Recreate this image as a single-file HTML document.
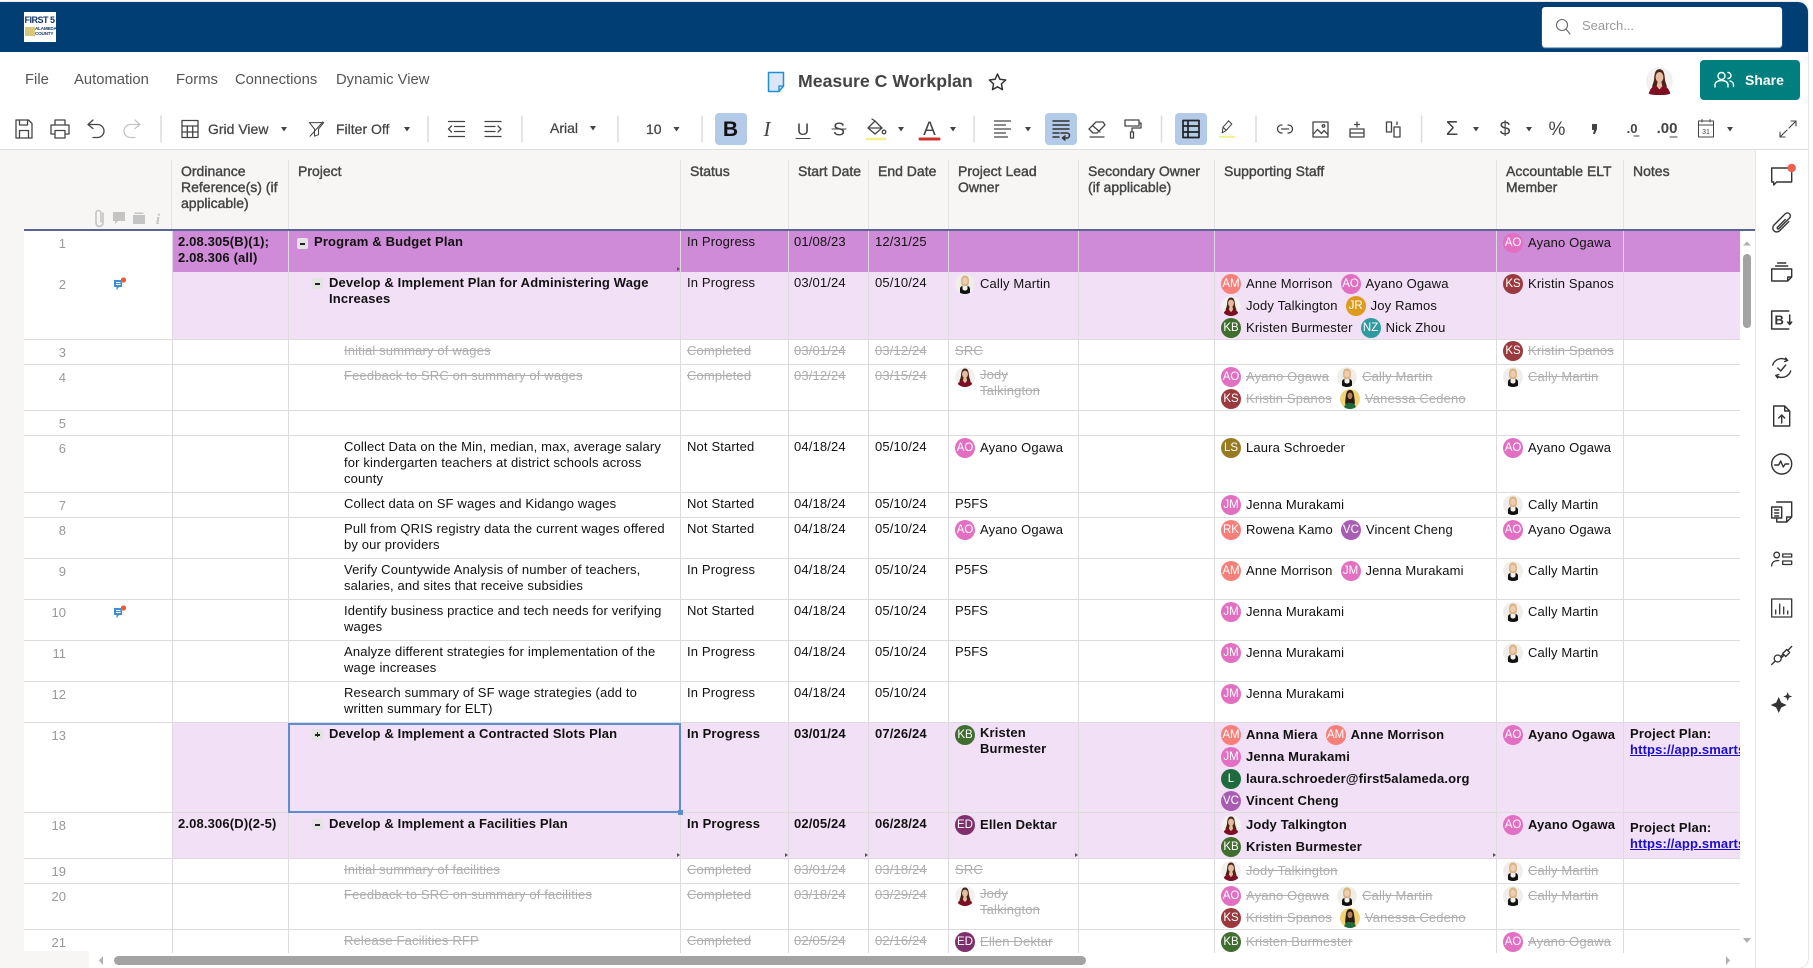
<!DOCTYPE html>
<html lang="en"><head><meta charset="utf-8"><title>Measure C Workplan</title>
<style>
html,body{margin:0;padding:0;background:#fff;width:1813px;height:968px;overflow:hidden}
*{box-sizing:border-box}
body{font-family:"Liberation Sans",Arial,sans-serif;font-size:13px;color:#111;position:relative}
.abs{position:absolute}
#card{position:absolute;left:0;top:2px;width:1808px;height:966px;background:#fff;border-radius:0 10px 10px 0;box-shadow:0 0 2px #bbb;overflow:hidden}
#top{position:absolute;left:0;top:2px;width:1808px;height:50px;background:#003e74;border-radius:0 10px 0 0}
#logo{position:absolute;left:24px;top:12px;width:32px;height:30px;background:#fff;overflow:hidden}
.menu{position:absolute;top:71px;font-size:14.8px;line-height:18px;color:#555;white-space:nowrap}
.tb{position:absolute;top:120px;font-size:14px;line-height:18px;color:#444;white-space:nowrap;-webkit-text-stroke:.25px #444}
#hdr{position:absolute;left:0;top:150px;width:1755px;height:79px;background:#f7f6f5}
.h{position:absolute;top:163px;font-size:14px;line-height:16px;color:#444;white-space:nowrap;-webkit-text-stroke:.4px #444}
.hl{position:absolute;top:160px;height:69px;width:1px;background:#e3e3e3}
#grid{position:absolute;left:0;top:231px;width:1740px;height:722px;overflow:hidden}
#gbg{position:absolute;left:24px;top:0;width:1716px;height:722px;background:#fff}
#strip{position:absolute;left:0;top:150px;width:24px;height:818px;background:#f7f6f5}
.r{position:absolute;left:24px;width:1716px;border-bottom:1px solid #dcdcdc}
.r>*{position:absolute;top:3px;line-height:16px;white-space:nowrap;letter-spacing:.15px}
.bar{position:absolute;left:148px;top:0!important;bottom:0;right:0}
.r>.n{right:1674px;top:5px;color:#999;letter-spacing:0}
.o{left:154px}
.l1{left:290px}.l2{left:305px}.l3{left:320px}
.s{left:663px}.d1{left:770px}.d2{left:851px}
.ld{left:931px}.st{left:1197px}.ac{left:1479px}
.nt{left:1606px;width:110px;overflow:hidden}
.r>.ld,.r>.st,.r>.ac{top:1px}
.r>.ln2{top:2px}
.r>span.ld{top:3px}
.ln{display:flex;align-items:center;height:22px;line-height:16px;white-space:nowrap}
.ln2{display:flex;align-items:flex-start;line-height:16px}
.a{flex:none;display:block;width:20px;height:20px;border-radius:50%;color:#fff;font-size:11.5px;line-height:20px;text-align:center;margin-right:5px;letter-spacing:0;font-weight:normal;overflow:hidden}
.t{margin-right:8px}
.b{font-weight:bold;-webkit-text-stroke:0}
.x,.x *{color:#aeaeae}
.x .t,.x.tx{text-decoration:line-through}
.x .a{color:#fff}
.tx{text-decoration:line-through}
.tg{left:0;width:11px;height:11px;background:#e3e3e3;border-radius:2px;font-size:0}
.tg:before{content:"";position:absolute;left:3px;top:5px;width:5px;height:1.6px;background:#222}
.tg.plus:after{content:"";position:absolute;left:4.7px;top:3.2px;width:1.6px;height:5px;background:#222}
.vl{position:absolute;top:0;height:722px;width:1px;background:#dfdadf}
.mk{position:absolute;width:0;height:0;border-left:3px solid #555;border-top:2.5px solid transparent;border-bottom:2.5px solid transparent}
a{color:#1a0dd6;text-decoration:underline}
.c-am{background:#f67f79}.c-ao{background:#e26fc2}.c-ks{background:#9b3a3e}.c-kb{background:#3f6e2e}.c-nz{background:#2f9aa0}.c-jr{background:#dd9b1d}.c-ls{background:#997a22}.c-jm{background:#e26fc2}.c-rk{background:#f67f79}.c-vc{background:#a65db2}.c-ed{background:#7f2f6b}.c-l{background:#1f6b3d}
svg.a{background:none}
</style></head><body>
<svg width="0" height="0" style="position:absolute"><defs>
<symbol id="jody" viewBox="0 0 20 20"><circle cx="10" cy="10" r="10" fill="#f3f1ef"/><path d="M10 1.500C7 1.500 6.300 4.500 6 8.500 5.800 11 4.800 12.500 4.500 14L7 15H13L15.500 14C15.200 12.500 14.200 11 14 8.500 13.700 4.500 13 1.500 10 1.500Z" fill="#4a2418"/><ellipse cx="10" cy="7.300" rx="2.900" ry="3.700" fill="#e6bda2"/><path d="M8.600 10.500h2.800l1 4.500h-4.800Z" fill="#e6bda2"/><path d="M2 19C3 15.500 5 13.500 7.500 13.300L10 16 12.500 13.300C15 13.500 17 15.500 18 19 15.500 20.500 4.500 20.500 2 19Z" fill="#7c1022"/></symbol>
<symbol id="cally" viewBox="0 0 20 20"><circle cx="10" cy="10" r="10" fill="#efeeea"/><path d="M10 1.500C7 1.500 6 4 6 7 6 9.500 6.500 11 7.500 12H12.500C13.500 11 14 9.500 14 7 14 4 13 1.500 10 1.500Z" fill="#d8b583"/><ellipse cx="10" cy="7" rx="2.600" ry="3.400" fill="#efcdb2"/><path d="M5 20V15C5 13 6.500 12 7.500 12V15C8.500 17 11.500 17 12.500 15V12C13.500 12 15 13 15 15V20Z" fill="#111"/><path d="M7.500 12.500h5V15c-1 2-4 2-5 0Z" fill="#f4f0ea"/></symbol>
<symbol id="van" viewBox="0 0 20 20"><circle cx="10" cy="10" r="10" fill="#f0d277"/><path d="M10 1C6.500 1 6 5 5.500 10 5 13 5 15 6 17H14C15 15 15 13 14.500 10 14 5 13.500 1 10 1Z" fill="#2a1b10"/><ellipse cx="10" cy="6.800" rx="2.500" ry="3.300" fill="#b5825b"/><path d="M4 20C4 16.500 6 14.500 8 14H12C14 14.500 16 16.500 16 20Z" fill="#1e6a3b"/></symbol>
</defs></svg>

<div id="card"></div>
<div id="top"></div>
<div id="logo">
  <div class="abs b" style="left:.5px;top:3px;font-size:9px;line-height:11px;color:#14376b;letter-spacing:-.5px;white-space:nowrap">FIRST 5</div>
  <div class="abs" style="left:1px;top:15px;width:10px;height:9px;background:#d7c77a"></div>
  <div class="abs b" style="left:11px;top:15px;font-size:4.600px;line-height:4.800px;color:#14376b;letter-spacing:-.2px;white-space:nowrap">ALAMEDA<br>COUNTY</div>
</div>
<div class="abs" style="left:1542px;top:7px;width:240px;height:40px;background:#fff;border-radius:3px;box-shadow:0 1px 1px #b8c8da"></div>
<div class="abs" style="left:1582px;top:18px;font-size:13px;line-height:16px;color:#999">Search...</div>

<span class="menu" style="left:25px">File</span>
<span class="menu" style="left:74px">Automation</span>
<span class="menu" style="left:176px">Forms</span>
<span class="menu" style="left:235px">Connections</span>
<span class="menu" style="left:336px">Dynamic View</span>
<div class="abs b" style="left:798px;top:70px;font-size:17.700px;line-height:22px;color:#444;white-space:nowrap">Measure C Workplan</div>

<div class="abs" style="left:1700px;top:60px;width:100px;height:40px;background:#007f7e;border-radius:4px"></div>
<div class="abs b" style="left:1745px;top:71px;font-size:14px;line-height:18px;color:#fff">Share</div>
<svg class="abs" style="left:1646px;top:67px" width="27" height="28" viewBox="0 0 20 20" preserveAspectRatio="none"><use href="#jody"/></svg>

<div class="abs" style="left:715px;top:113px;width:32px;height:32px;background:#b3cbe9;border-radius:4px"></div>
<div class="abs" style="left:1045px;top:113px;width:32px;height:32px;background:#b3cbe9;border-radius:4px"></div>
<div class="abs" style="left:1175px;top:113px;width:32px;height:32px;background:#b3cbe9;border-radius:4px"></div>
<span class="tb" style="left:208px">Grid View</span>
<span class="tb" style="left:336px">Filter Off</span>
<span class="tb" style="left:550px;top:119px">Arial</span>
<span class="tb" style="left:646px">10</span>
<div class="abs" style="left:0;top:149px;width:1808px;height:1px;background:#dedede"></div>

<div id="strip"></div>
<div id="hdr"></div>
<div class="hl" style="left:171px"></div><div class="hl" style="left:288px"></div><div class="hl" style="left:680px"></div><div class="hl" style="left:788px"></div><div class="hl" style="left:868px"></div><div class="hl" style="left:948px"></div><div class="hl" style="left:1078px"></div><div class="hl" style="left:1214px"></div><div class="hl" style="left:1496px"></div><div class="hl" style="left:1623px"></div>
<div class="h" style="left:181px">Ordinance<br>Reference(s) (if<br>applicable)</div>
<div class="h" style="left:298px">Project</div>
<div class="h" style="left:690px">Status</div>
<div class="h" style="left:798px">Start Date</div>
<div class="h" style="left:878px">End Date</div>
<div class="h" style="left:958px">Project Lead<br>Owner</div>
<div class="h" style="left:1088px">Secondary Owner<br>(if applicable)</div>
<div class="h" style="left:1224px">Supporting Staff</div>
<div class="h" style="left:1506px">Accountable ELT<br>Member</div>
<div class="h" style="left:1633px">Notes</div>
<div class="abs" style="left:24px;top:229px;width:1731px;height:2px;background:#5b6592"></div>

<div id="grid"><div id="gbg"></div>
<!-- R1 -->
<div class="r" style="top:0;height:41px;border:0"><div class="bar" style="background:#cf8bd7"></div>
<span class="n">1</span><span class="o b">2.08.305(B)(1);<br>2.08.306 (all)</span><span class="tg" style="left:273px;top:7px"></span><span class="l1 b">Program &amp; Budget Plan</span><span class="s">In Progress</span><span class="d1">01/08/23</span><span class="d2">12/31/25</span>
<div class="ac" style="top:1px"><div class="ln"><span class="a c-ao">AO</span><span class="t">Ayano Ogawa</span></div></div></div>
<!-- R2 -->
<div class="r" style="top:41px;height:68px"><div class="bar" style="background:#f2e0f6"></div>
<span class="n">2</span><span class="tg" style="left:288px;top:6px"></span><span class="l2 b">Develop &amp; Implement Plan for Administering Wage<br>Increases</span><span class="s">In Progress</span><span class="d1">03/01/24</span><span class="d2">05/10/24</span>
<div class="ld"><div class="ln"><svg class="a" viewBox="0 0 20 20"><use href="#cally"/></svg><span class="t">Cally Martin</span></div></div>
<div class="st"><div class="ln"><span class="a c-am">AM</span><span class="t">Anne Morrison</span><span class="a c-ao">AO</span><span class="t">Ayano Ogawa</span></div><div class="ln"><svg class="a" viewBox="0 0 20 20"><use href="#jody"/></svg><span class="t">Jody Talkington</span><span class="a c-jr">JR</span><span class="t">Joy Ramos</span></div><div class="ln"><span class="a c-kb">KB</span><span class="t">Kristen Burmester</span><span class="a c-nz">NZ</span><span class="t">Nick Zhou</span></div></div>
<div class="ac"><div class="ln"><span class="a c-ks">KS</span><span class="t">Kristin Spanos</span></div></div></div>
<!-- R3 -->
<div class="r x" style="top:109px;height:25px"><span class="n">3</span><span class="l3 tx">Initial summary of wages</span><span class="s tx">Completed</span><span class="d1 tx">03/01/24</span><span class="d2 tx">03/12/24</span><span class="ld tx">SRC</span>
<div class="ac" style="top:0"><div class="ln"><span class="a c-ks">KS</span><span class="t">Kristin Spanos</span></div></div></div>
<!-- R4 -->
<div class="r x" style="top:134px;height:46px"><span class="n">4</span><span class="l3 tx">Feedback to SRC on summary of wages</span><span class="s tx">Completed</span><span class="d1 tx">03/12/24</span><span class="d2 tx">03/15/24</span>
<div class="ld ln2"><svg class="a" viewBox="0 0 20 20"><use href="#jody"/></svg><span class="t">Jody<br>Talkington</span></div>
<div class="st"><div class="ln"><span class="a c-ao">AO</span><span class="t">Ayano Ogawa</span><svg class="a" viewBox="0 0 20 20"><use href="#cally"/></svg><span class="t">Cally Martin</span></div><div class="ln"><span class="a c-ks">KS</span><span class="t">Kristin Spanos</span><svg class="a" viewBox="0 0 20 20"><use href="#van"/></svg><span class="t">Vanessa Cedeno</span></div></div>
<div class="ac"><div class="ln"><svg class="a" viewBox="0 0 20 20"><use href="#cally"/></svg><span class="t">Cally Martin</span></div></div></div>
<!-- R5 -->
<div class="r" style="top:180px;height:25px"><span class="n">5</span></div>
<!-- R6 -->
<div class="r" style="top:205px;height:57px"><span class="n">6</span><span class="l3">Collect Data on the Min, median, max, average salary<br>for kindergarten teachers at district schools across<br>county</span><span class="s">Not Started</span><span class="d1">04/18/24</span><span class="d2">05/10/24</span>
<div class="ld"><div class="ln"><span class="a c-ao">AO</span><span class="t">Ayano Ogawa</span></div></div><div class="st"><div class="ln"><span class="a c-ls">LS</span><span class="t">Laura Schroeder</span></div></div><div class="ac"><div class="ln"><span class="a c-ao">AO</span><span class="t">Ayano Ogawa</span></div></div></div>
<!-- R7 -->
<div class="r" style="top:262px;height:25px"><span class="n">7</span><span class="l3">Collect data on SF wages and Kidango wages</span><span class="s">Not Started</span><span class="d1">04/18/24</span><span class="d2">05/10/24</span><span class="ld">P5FS</span>
<div class="st" style="top:1px"><div class="ln"><span class="a c-jm">JM</span><span class="t">Jenna Murakami</span></div></div><div class="ac" style="top:1px"><div class="ln"><svg class="a" viewBox="0 0 20 20"><use href="#cally"/></svg><span class="t">Cally Martin</span></div></div></div>
<!-- R8 -->
<div class="r" style="top:287px;height:41px"><span class="n">8</span><span class="l3">Pull from QRIS registry data the current wages offered<br>by our providers</span><span class="s">Not Started</span><span class="d1">04/18/24</span><span class="d2">05/10/24</span>
<div class="ld"><div class="ln"><span class="a c-ao">AO</span><span class="t">Ayano Ogawa</span></div></div><div class="st"><div class="ln"><span class="a c-rk">RK</span><span class="t">Rowena Kamo</span><span class="a c-vc">VC</span><span class="t">Vincent Cheng</span></div></div><div class="ac"><div class="ln"><span class="a c-ao">AO</span><span class="t">Ayano Ogawa</span></div></div></div>
<!-- R9 -->
<div class="r" style="top:328px;height:41px"><span class="n">9</span><span class="l3">Verify Countywide Analysis of number of teachers,<br>salaries, and sites that receive subsidies</span><span class="s">In Progress</span><span class="d1">04/18/24</span><span class="d2">05/10/24</span><span class="ld">P5FS</span>
<div class="st"><div class="ln"><span class="a c-am">AM</span><span class="t">Anne Morrison</span><span class="a c-jm">JM</span><span class="t">Jenna Murakami</span></div></div><div class="ac"><div class="ln"><svg class="a" viewBox="0 0 20 20"><use href="#cally"/></svg><span class="t">Cally Martin</span></div></div></div>
<!-- R10 -->
<div class="r" style="top:369px;height:41px"><span class="n">10</span><span class="l3">Identify business practice and tech needs for verifying<br>wages</span><span class="s">Not Started</span><span class="d1">04/18/24</span><span class="d2">05/10/24</span><span class="ld">P5FS</span>
<div class="st"><div class="ln"><span class="a c-jm">JM</span><span class="t">Jenna Murakami</span></div></div><div class="ac"><div class="ln"><svg class="a" viewBox="0 0 20 20"><use href="#cally"/></svg><span class="t">Cally Martin</span></div></div></div>
<!-- R11 -->
<div class="r" style="top:410px;height:41px"><span class="n">11</span><span class="l3">Analyze different strategies for implementation of the<br>wage increases</span><span class="s">In Progress</span><span class="d1">04/18/24</span><span class="d2">05/10/24</span><span class="ld">P5FS</span>
<div class="st"><div class="ln"><span class="a c-jm">JM</span><span class="t">Jenna Murakami</span></div></div><div class="ac"><div class="ln"><svg class="a" viewBox="0 0 20 20"><use href="#cally"/></svg><span class="t">Cally Martin</span></div></div></div>
<!-- R12 -->
<div class="r" style="top:451px;height:41px"><span class="n">12</span><span class="l3">Research summary of SF wage strategies (add to<br>written summary for ELT)</span><span class="s">In Progress</span><span class="d1">04/18/24</span><span class="d2">05/10/24</span>
<div class="st"><div class="ln"><span class="a c-jm">JM</span><span class="t">Jenna Murakami</span></div></div></div>
<!-- R13 -->
<div class="r b" style="top:492px;height:90px"><div class="bar" style="background:#f2e0f6"></div>
<span class="n" style="font-weight:normal">13</span><span class="tg plus" style="left:288px;top:6px"></span><span class="l2">Develop &amp; Implement a Contracted Slots Plan</span><span class="s">In Progress</span><span class="d1">03/01/24</span><span class="d2">07/26/24</span>
<div class="ld ln2"><span class="a c-kb">KB</span><span class="t">Kristen<br>Burmester</span></div>
<div class="st"><div class="ln"><span class="a c-am">AM</span><span class="t">Anna Miera</span><span class="a c-am">AM</span><span class="t">Anne Morrison</span></div><div class="ln"><span class="a c-jm">JM</span><span class="t">Jenna Murakami</span></div><div class="ln"><span class="a c-l">L</span><span class="t">laura.schroeder@first5alameda.org</span></div><div class="ln"><span class="a c-vc">VC</span><span class="t">Vincent Cheng</span></div></div>
<div class="ac"><div class="ln"><span class="a c-ao">AO</span><span class="t">Ayano Ogawa</span></div></div>
<div class="nt" style="font-weight:bold">Project Plan:<br><a>https://app.smartsheet.com</a></div></div>
<!-- R18 -->
<div class="r b" style="top:582px;height:46px"><div class="bar" style="background:#f2e0f6"></div>
<span class="n" style="font-weight:normal">18</span><span class="o">2.08.306(D)(2-5)</span><span class="tg" style="left:288px;top:6px"></span><span class="l2">Develop &amp; Implement a Facilities Plan</span><span class="s">In Progress</span><span class="d1">02/05/24</span><span class="d2">06/28/24</span>
<div class="ld"><div class="ln"><span class="a c-ed">ED</span><span class="t">Ellen Dektar</span></div></div>
<div class="st"><div class="ln"><svg class="a" viewBox="0 0 20 20"><use href="#jody"/></svg><span class="t">Jody Talkington</span></div><div class="ln"><span class="a c-kb">KB</span><span class="t">Kristen Burmester</span></div></div>
<div class="ac"><div class="ln"><span class="a c-ao">AO</span><span class="t">Ayano Ogawa</span></div></div>
<div class="nt" style="top:7px;font-weight:bold">Project Plan:<br><a>https://app.smartsheet.com</a></div></div>
<!-- R19 -->
<div class="r x" style="top:628px;height:25px"><span class="n">19</span><span class="l3 tx">Initial summary of facilities</span><span class="s tx">Completed</span><span class="d1 tx">03/01/24</span><span class="d2 tx">03/18/24</span><span class="ld tx">SRC</span>
<div class="st" style="top:1px"><div class="ln"><svg class="a" viewBox="0 0 20 20"><use href="#jody"/></svg><span class="t">Jody Talkington</span></div></div><div class="ac" style="top:1px"><div class="ln"><svg class="a" viewBox="0 0 20 20"><use href="#cally"/></svg><span class="t">Cally Martin</span></div></div></div>
<!-- R20 -->
<div class="r x" style="top:653px;height:46px"><span class="n">20</span><span class="l3 tx">Feedback to SRC on summary of facilities</span><span class="s tx">Completed</span><span class="d1 tx">03/18/24</span><span class="d2 tx">03/29/24</span>
<div class="ld ln2"><svg class="a" viewBox="0 0 20 20"><use href="#jody"/></svg><span class="t">Jody<br>Talkington</span></div>
<div class="st"><div class="ln"><span class="a c-ao">AO</span><span class="t">Ayano Ogawa</span><svg class="a" viewBox="0 0 20 20"><use href="#cally"/></svg><span class="t">Cally Martin</span></div><div class="ln"><span class="a c-ks">KS</span><span class="t">Kristin Spanos</span><svg class="a" viewBox="0 0 20 20"><use href="#van"/></svg><span class="t">Vanessa Cedeno</span></div></div>
<div class="ac"><div class="ln"><svg class="a" viewBox="0 0 20 20"><use href="#cally"/></svg><span class="t">Cally Martin</span></div></div></div>
<!-- R21 -->
<div class="r x" style="top:699px;height:46px;border:0"><span class="n">21</span><span class="l3 tx">Release Facilities RFP</span><span class="s tx">Completed</span><span class="d1 tx">02/05/24</span><span class="d2 tx">02/16/24</span>
<div class="ld" style="top:1px"><div class="ln"><span class="a c-ed">ED</span><span class="t">Ellen Dektar</span></div></div><div class="st" style="top:1px"><div class="ln"><span class="a c-kb">KB</span><span class="t">Kristen Burmester</span></div></div><div class="ac" style="top:1px"><div class="ln"><span class="a c-ao">AO</span><span class="t">Ayano Ogawa</span></div></div></div>

<div class="vl" style="left:172px"></div><div class="vl" style="left:288px"></div><div class="vl" style="left:680px"></div><div class="vl" style="left:788px"></div><div class="vl" style="left:868px"></div><div class="vl" style="left:948px"></div><div class="vl" style="left:1078px"></div><div class="vl" style="left:1214px"></div><div class="vl" style="left:1496px"></div><div class="vl" style="left:1623px"></div>
<!-- selection -->
<div class="abs" style="left:288px;top:492px;width:393px;height:90px;border:2px solid #5b8fd0"></div>
<div class="abs" style="left:678px;top:579px;width:5px;height:5px;background:#5b8fd0"></div>
<div class="mk" style="left:677px;top:36px"></div>
<div class="mk" style="left:677px;top:622px"></div><div class="mk" style="left:785px;top:622px"></div><div class="mk" style="left:865px;top:622px"></div><div class="mk" style="left:1075px;top:622px"></div><div class="mk" style="left:1493px;top:622px"></div>
<!-- comment markers -->
<svg class="abs" style="left:112px;top:46px" width="16" height="16" viewBox="0 0 16 16"><path d="M2 3H10V10H7L4.500 13.500V10H2Z" fill="#3f8fd2"/><path d="M4 5.500H8.500M4 7.500H8.500" stroke="#fff" stroke-width="1"/><circle cx="11.500" cy="3" r="2.600" fill="#ea5b3a"/></svg>
<svg class="abs" style="left:112px;top:374px" width="16" height="16" viewBox="0 0 16 16"><path d="M2 3H10V10H7L4.500 13.500V10H2Z" fill="#3f8fd2"/><path d="M4 5.500H8.500M4 7.500H8.500" stroke="#fff" stroke-width="1"/><circle cx="11.500" cy="3" r="2.600" fill="#ea5b3a"/></svg>
</div>

<!-- scrollbars / panel -->
<div class="abs" style="left:0;top:951px;width:89px;height:17px;background:#f7f6f5"></div>
<div class="abs" style="left:1743px;top:254px;width:8px;height:74px;background:#a3a3a3;border-radius:4px"></div>
<div class="abs" style="left:114px;top:956px;width:972px;height:9px;background:#a3a3a3;border-radius:5px"></div>
<div class="abs" style="left:1755px;top:150px;width:1px;height:818px;background:#e6e6e6"></div>

<svg class="abs" style="left:0;top:0" width="1813" height="968" viewBox="0 0 1813 968" fill="none" stroke="#444" stroke-width="1.300" stroke-linecap="round" stroke-linejoin="round" font-family="Liberation Sans,Arial,sans-serif">
<!-- scroll arrows -->
<g fill="#b0b0b0" stroke="none"><path d="M1743 245.500h8l-4-4Z"/><path d="M1743 938h8l-4 5Z"/><path d="M1726 956v9l4-4.500Z"/><path d="M103 956v9l-4-4.500Z"/></g>
<!-- search + star + doc -->
<g transform="translate(1563,26)" stroke="#666" stroke-width="1.100"><circle cx="-1" cy="-1" r="5.500"/><path d="M3 3 7 8"/></g>
<g transform="translate(776,82)"><path d="M-7.500-9.500H7.500V4L3 9.500H-7.500Z" fill="#dbe6f7" stroke="#1e8fd0" stroke-width="1.500"/><path d="M7.500 4H3V9.500" stroke="#1e8fd0"/></g>
<path transform="translate(997.500,82)" d="M0-8 2.400-2.700 8.200-2 3.900 1.900 5 7.600 0 4.800-5 7.600-3.900 1.900-8.200-2-2.400-2.700Z" stroke="#333" stroke-width="1.500"/>
<g transform="translate(1724,80)" stroke="#fff" stroke-width="1.400"><circle cx="-2.500" cy="-4" r="3.500"/><path d="M-9 7V5C-9 2-6 .5-2.500.5S4 2 4 5V7"/><path d="M4-7.500A3 3 0 0 1 4-1.500M6 1C8 1.500 9.500 3 9.500 5V6.500"/></g>
<!-- toolbar -->
<g transform="translate(24,129)"><path d="M-8-9H4.500L8-5.500V9H-8Z M-4.500-9V-4H3.500V-9 M-4.500 9V1.500H4.500V9"/></g>
<g transform="translate(60,129)"><path d="M-5-4V-9H5V-4 M-5 5H-9V-4H9V5H5 M-5 1.500H5V9H-5Z"/></g>
<g transform="translate(96,129)"><path d="M-3-9-8-4.500-3-.5 M-8-4.500H1.500A6.500 6.500 0 0 1 1.500 8.500H-3"/></g>
<g transform="translate(132,129)" stroke="#c4c4c4"><path d="M3-9 8-4.500 3-.5 M8-4.500H-1.500A6.500 6.500 0 0 0-1.500 8.500H3"/></g>
<path d="M161 116V142M428 116V142M522 116V142M618 116V142M702 116V142M974 116V142M1161.500 116V142M1256 116V142M1421.500 116V142" stroke="#dcdcdc" stroke-width="1.500"/>
<g transform="translate(190,129)"><path d="M-8-8.500H8V8.500H-8Z M-8-3H8M-8 3H8M-2.700-3V8.500M2.700-3V8.500"/></g>
<g transform="translate(316.500,129) scale(.8)"><path d="M-9-8H9L2.500 0V7L-2.500 9V0Z M-8 9 8-9"/></g>
<g fill="#444" stroke="none"><path d="M281 127h6l-3 4.500Z"/><path d="M404 127h6l-3 4.500Z"/><path d="M590 126h6l-3 4.500Z"/><path d="M673.500 127h6l-3 4.500Z"/><path d="M898 127h6l-3 4.500Z"/><path d="M950 127h6l-3 4.500Z"/><path d="M1025 127h6l-3 4.500Z"/><path d="M1473 127h6l-3 4.500Z"/><path d="M1526 127h6l-3 4.500Z"/><path d="M1727 127h6l-3 4.500Z"/></g>
<g transform="translate(456.500,129)"><path d="M-8-7.500H8M-2-2.500H8M-2 2.500H8M-8 7.500H8M-5-3-8 0-5 3"/></g>
<g transform="translate(493,129)"><path d="M-8-7.500H8M-8-2.500H2M-8 2.500H2M-8 7.500H8M5-3 8 0 5 3"/></g>
<text x="730.500" y="136" text-anchor="middle" font-size="21" font-weight="bold" fill="#111" stroke="none">B</text>
<text x="767" y="136" text-anchor="middle" font-size="21" font-family="Liberation Serif" font-style="italic" fill="#444" stroke="none">I</text>
<text x="803" y="135" text-anchor="middle" font-size="17" fill="#444" stroke="none">U</text><path d="M796 138.500H810" stroke-width="1.100"/>
<text x="839" y="135.500" text-anchor="middle" font-size="18" fill="#444" stroke="none">S</text><path d="M832 129H846" stroke-width="1.100"/>
<g transform="translate(876,128)"><path d="M-8 0-1-7 6 0-1 6Z M-8 0H6 M-4-9-1-7"/><circle cx="8" cy="4" r="1.800"/><path d="M-9 11H9" stroke="#f3ef8a" stroke-width="2.500"/></g>
<text x="929.500" y="135" text-anchor="middle" font-size="19" fill="#444" stroke="none">A</text><path d="M920 139H939" stroke="#d0312d" stroke-width="3"/>
<g transform="translate(1002.500,129)"><path d="M-8-8H8M-8-4H3M-8 0H8M-8 4H3M-8 8H5"/></g>
<g transform="translate(1061,129)" stroke-width="1.500" stroke="#333"><path d="M-8-8H8M-8-4H8M-8 0H8M-8 4H-2M-8 8H-2 M0 4H6A2.500 2.500 0 0 1 6 9H2M4 7 1.500 9 4 11"/></g>
<g transform="translate(1097,129)"><path d="M-8 0-1-7 6-7 8-4 0 4-4 4Z M-4-3 3 3 M-7 8H7"/></g>
<g transform="translate(1132,129)"><path d="M-7-9H7V-3H-7Z M7-6H9V-1H0V3 M-1.500 3H1.500V9H-1.500Z"/></g>
<g transform="translate(1191,129)" stroke="#222" stroke-width="1.700"><path d="M-8-8.500H8V8.500H-8Z M-8-3H8M-8 3H8M-3-8.500V8.500"/></g>
<g transform="translate(1227,128) scale(.8)"><path d="M-6 6-5-1 2-9 6-5-1 3Z M-5-1-1 3"/><path d="M-9 11H9" stroke="#f3ef8a" stroke-width="2.500"/></g>
<g transform="translate(1285,129)"><path d="M-3-4H-3.500A4 4 0 0 0-3.500 4H-3M3-4H3.500A4 4 0 0 1 3.500 4H3M-3.500 0H3.500"/></g>
<g transform="translate(1320.500,129.500)"><path d="M-7.500-7.500H7.500V7.500H-7.500Z M-7.500 5-3 0 1 4 3.500 1 7.500 5"/><circle cx="3" cy="-3.500" r="1.300"/></g>
<g transform="translate(1357,129)"><path d="M-7 0H7V8H-7Z M-7 4H7 M0-7V-2 M-2.500-4.500H2.500"/></g>
<g><path d="M1386.500 122H1391.500V132H1386.500Z M1394 127H1400V137H1394Z M1397 122V124.500"/></g>
<text x="1452" y="135" text-anchor="middle" font-size="20" fill="#444" stroke="none">Σ</text>
<text x="1505" y="135" text-anchor="middle" font-size="19" fill="#444" stroke="none">$</text>
<text x="1557" y="135" text-anchor="middle" font-size="19" fill="#444" stroke="none">%</text>
<path d="M1592 124h5v5l-2 5h-2l1-4h-2Z" fill="#444" stroke="none"/>
<text x="1632" y="133" text-anchor="middle" font-size="13" font-weight="bold" fill="#444" stroke="none">.0</text><path d="M1634 136H1639" stroke-width="1"/>
<text x="1667" y="133" text-anchor="middle" font-size="15" font-weight="bold" fill="#444" stroke="none">.00</text><path d="M1670 137H1677" stroke-width="1"/>
<g transform="translate(1706,129)" stroke-width="1"><path d="M-7.500-8H7.500V8H-7.500Z M-7.500-4H7.500 M-4-9.500V-7M4-9.500V-7"/><text x="0" y="5" text-anchor="middle" font-size="7" fill="#444" stroke="none">31</text></g>
<g transform="translate(1788,129)"><path d="M1-1 8-8M3-8H8V-3M-1 1-8 8M-8 3V8H-3" stroke-width="1.100"/></g>
<!-- header micro icons -->
<g stroke="#c4c4c4" stroke-width="1.600"><path d="M103 213V223A3.500 3.500 0 0 1 96 223V213A2.500 2.500 0 0 1 101 213V222"/></g>
<path d="M113 212h12v9h-7l-3 3v-3h-2Z" fill="#c4c4c4" stroke="none"/>
<path d="M133 215h12v9h-12Z M134.500 212.500h9v1.500h-9Z" fill="#c4c4c4" stroke="none"/>
<text x="158" y="224" text-anchor="middle" font-size="15" font-family="Liberation Serif" font-style="italic" font-weight="bold" fill="#c4c4c4" stroke="none">i</text>
<!-- right panel -->
<g transform="translate(1781.700,176)" stroke="#333" stroke-width="1.400"><path d="M-10-8H10V6H-5L-8 9V6H-10Z"/><circle cx="10" cy="-8" r="4.200" fill="#ee6149" stroke="none"/></g>
<g transform="translate(1781.700,223) rotate(45)" stroke="#333" stroke-width="1.400"><path d="M4-6V7A4 4 0 0 1-4 7V-9A3 3 0 0 1 2-9V6A1 1 0 0 1 0 6V-5"/></g>
<g transform="translate(1781.700,272)" stroke="#333" stroke-width="1.400"><path d="M-10-3H10V5L6 9H-10Z M6 9V5H10 M-6-6H6M-4-9H4"/></g>
<g transform="translate(1781.700,320)" stroke="#333" stroke-width="1.500"><path d="M7-9H-10V9H7"/><text x="-2.500" y="4.500" text-anchor="middle" font-size="13" font-weight="bold" fill="#333" stroke="none">B</text><path d="M8-5V4M6 2 8 4.500 10 2"/></g>
<g transform="translate(1781.700,368)" stroke="#333" stroke-width="1.400"><path d="M-9-3A9.500 9.500 0 0 1 5-8M9 3A9.500 9.500 0 0 1-5 8 M-4 0-1 3 4-3 M4-10 6-7.500 3-6.500 M-4 10-6 7.500-3 6.500"/></g>
<g transform="translate(1781.700,416)" stroke="#333" stroke-width="1.400"><path d="M-8-10H3L8-5V10H-8Z M3-10V-5H8 M0 7V-1M-3 2 0-1 3 2"/></g>
<g transform="translate(1781.700,464)" stroke="#333" stroke-width="1.400"><circle r="10"/><path d="M-7 1H-3L-1-3 1.500 3 3.500 0H7"/></g>
<g transform="translate(1781.700,512)" stroke="#333" stroke-width="1.400"><path d="M-5-10H10V5L5 10H-5V6 M5 10V5H10 M-5-5H-10V6H0V-5H-5 M-7-2H-3M-7 1H-3M-7 4H-3"/></g>
<g transform="translate(1781.700,560)" stroke="#333" stroke-width="1.300"><circle cx="-5" cy="-5" r="2.800"/><path d="M-10 6C-10 2-7 .5-3 .5 M1-6H10V-3H1Z M1 1H10V4.500H1Z"/></g>
<g transform="translate(1781.700,608)" stroke="#333" stroke-width="1.300"><path d="M-10-9H10V9H-10Z M-6 6V2M-2 6V-4M2 6V-1M6 6V3"/></g>
<g transform="translate(1781.700,655.500)" stroke="#333" stroke-width="1.300"><path d="M-10 9-7 6M10-9 6-5"/><circle cx="-4" cy="3" r="3.500"/><path d="M1-2 5-6 8-3 4 1Z M-1 1 1-1 2 0 0 2"/></g>
<g transform="translate(1781.700,703)" fill="#333" stroke="none"><path d="M-3-6-.5-.5 5 2-.5 4.500-3 10-5.500 4.500-11 2-5.500-.5Z"/><path d="M6-11 7.200-7.800 10.500-6.500 7.200-5.200 6-2 4.800-5.200 1.500-6.500 4.800-7.800Z"/></g>
</svg>
</body></html>
